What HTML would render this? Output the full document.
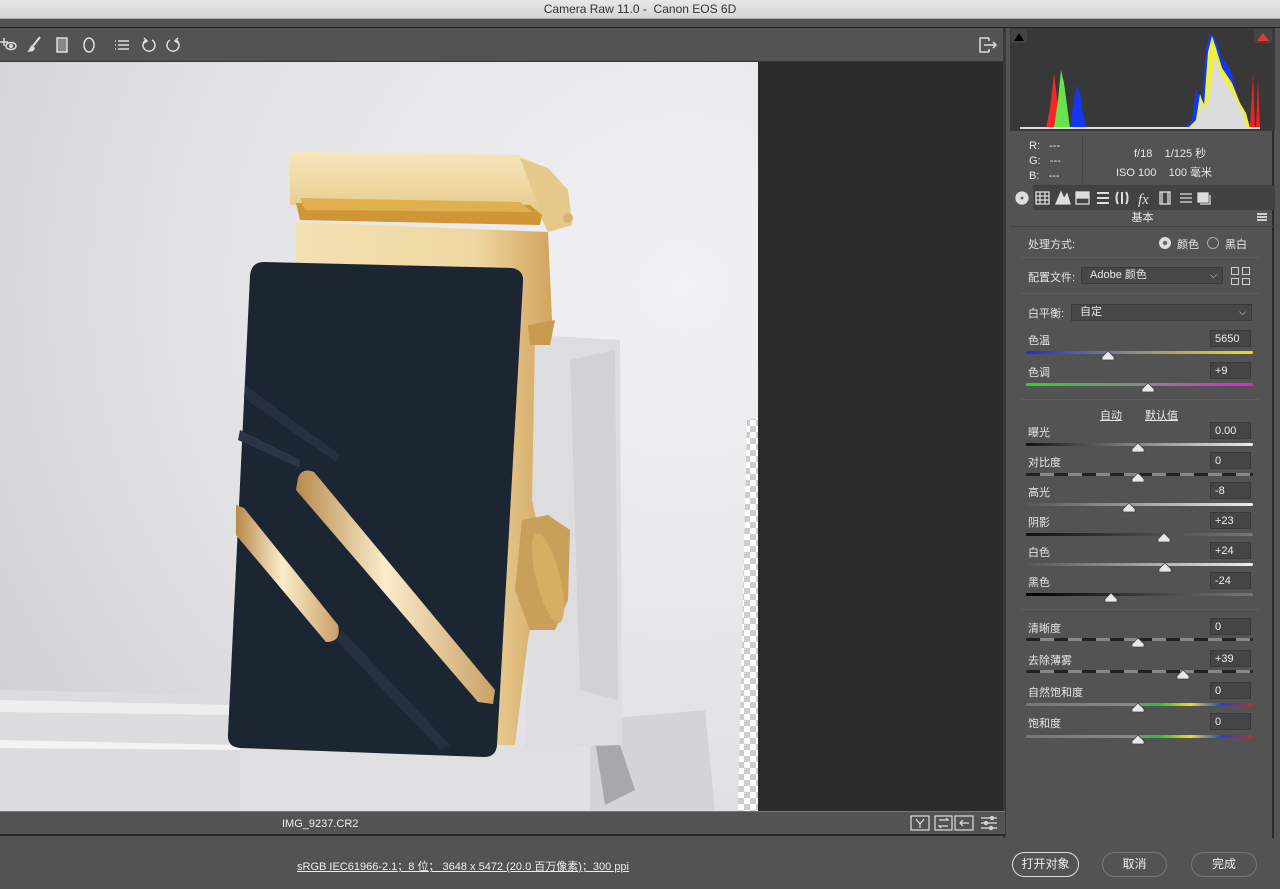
<!DOCTYPE html>
<html><head><meta charset="utf-8"><style>
*{margin:0;padding:0;box-sizing:border-box}
body{width:1280px;height:889px;overflow:hidden;background:#535353;font-family:"Liberation Sans","Noto Sans CJK SC",sans-serif;color:#e8e8e8;font-size:11px;position:relative}
.a{position:absolute}
.lbl{position:absolute;left:1028px;font-size:11px;color:#e6e6e6}
.box{position:absolute;left:1210px;width:41px;height:17px;background:#454545;border:1px solid #3a3a3a;color:#eee;font-size:11px;padding:2px 4px;line-height:12px}
.tr{position:absolute;left:1026px;width:227px;height:3px;border-radius:2px;background:linear-gradient(#222,#777)}
.sep{position:absolute;left:1021px;width:238px;height:1px;background:#444;border-bottom:1px solid #5e5e5e}
.btn{position:absolute;top:852px;height:25px;border:1px solid #777;border-radius:13px;text-align:center;line-height:23px;font-size:12px;color:#eee}
</style></head><body>
<div class="a" style="left:0;top:0;width:1280px;height:19px;background:linear-gradient(#e8e8e8,#d6d6d6);color:#333;font-size:12px;text-align:center;line-height:18px;border-bottom:1px solid #aaa">Camera Raw 11.0 -&nbsp; Canon EOS 6D</div>
<div class="a" style="left:0;top:19px;width:1280px;height:9px;background:#535353;border-bottom:1px solid #222"></div>
<div class="a" style="left:0;top:28px;width:1005px;height:34px;background:#535353;border-bottom:1px solid #333"></div>
<svg class="a" style="left:0;top:30px" width="200" height="30" stroke="#ddd" fill="none" stroke-width="1.5">
<path d="M0 12h8M4 8v8"/><ellipse cx="11" cy="16" rx="5" ry="3.5"/><circle cx="11" cy="16" r="1.2" fill="#ddd"/>
<path d="M40 7l-7 9" stroke-width="2"/><path d="M32 16c-2 2-2 4-3 5 3 0 5-1 5-3z" fill="#ddd"/>
<rect x="57" y="8" width="10" height="14" fill="#888"/>
<ellipse cx="89" cy="15" rx="5" ry="7"/>
<path d="M118 11h11M118 15h11M118 19h11M115 11h1M115 15h1M115 19h1"/>
<path d="M146 10a6 6 0 1 0 6 0"/><path d="M144 8l3 3-3 2" />
<path d="M170 10a6 6 0 1 0 6 0"/><path d="M178 8l-3 3 3 2"/>
</svg>
<svg class="a" style="left:977px;top:35px" width="22" height="20" stroke="#ddd" fill="none" stroke-width="1.5"><path d="M12 3H3v14h9M12 17V14M12 3v3"/><path d="M7 10h12M16 7l3 3-3 3"/></svg>
<svg class="a" style="left:0;top:62px" width="758" height="749" viewBox="0 62 758 749">
<defs>
<radialGradient id="bg" cx="0.9" cy="0.3" r="1.1"><stop offset="0" stop-color="#f2f1f3"/><stop offset=".6" stop-color="#e2e2e5"/><stop offset="1" stop-color="#cfcfd3"/></radialGradient>
<linearGradient id="gold" x1="0" y1="0" x2="1" y2="0"><stop offset="0" stop-color="#f3e0b2"/><stop offset=".7" stop-color="#efd7a0"/><stop offset="1" stop-color="#d2a560"/></linearGradient>
<linearGradient id="bar" x1="0" y1="0" x2="1" y2="0"><stop offset="0" stop-color="#b68a4c"/><stop offset=".45" stop-color="#fbeccb"/><stop offset="1" stop-color="#caa066"/></linearGradient>
<linearGradient id="cap" x1="0" y1="0" x2="0" y2="1"><stop offset="0" stop-color="#f7e6bb"/><stop offset="1" stop-color="#e2c27e"/></linearGradient>
<pattern id="ck" width="12" height="12" patternUnits="userSpaceOnUse"><rect width="12" height="12" fill="#fff"/><rect width="6" height="6" fill="#ccc"/><rect x="6" y="6" width="6" height="6" fill="#ccc"/></pattern>
</defs>
<rect x="0" y="62" width="758" height="749" fill="url(#bg)"/>
<path d="M747 420L758 418V811H738Z" fill="url(#ck)"/>
<path d="M0 690L240 695 240 811H0Z" fill="#dcdcde"/>
<path d="M0 700L235 705V715L0 712Z" fill="#eeeeef"/>
<path d="M0 740L240 745V750L0 748Z" fill="#f3f3f4"/>
<path d="M240 745L600 745 600 811 240 811Z" fill="#e0e0e2"/>
<path d="M590 720L705 710 715 811 590 811Z" fill="#d4d4d6"/>
<path d="M595 740l25 5 15 45-30 15z" fill="#a8a8aa"/>
<path d="M535 335L620 340 622 745 525 748Z" fill="#dddddf"/>
<path d="M570 360L615 350 618 700 580 690Z" fill="#cdcdcf" opacity=".7"/>
<path d="M296 222L548 232 552 320 535 335 532 500 545 560 528 640 515 745 300 745Z" fill="url(#gold)"/>
<path d="M528 325L555 320 550 345 530 345Z" fill="#c89a50"/>
<path d="M522 520L548 515 570 530 568 600 555 630 530 630 515 590Z" fill="#c9a05a"/>
<ellipse cx="548" cy="578" rx="12" ry="46" fill="#d7ae62" transform="rotate(-14 548 578)"/>
<path d="M290 155Q292 152 300 152L520 155 545 168 568 190 572 225 548 232 540 215 290 205Z" fill="url(#cap)"/>
<path d="M520 158L548 168 568 190 572 225 548 232Z" fill="#e6c88a"/>
<path d="M296 203L530 205 542 215 540 225 300 220Z" fill="#cf9638"/>
<path d="M300 198L520 202 532 212 305 210Z" fill="#e0b050"/>
<path d="M563 218a5 5 0 1 0 10 0a5 5 0 1 0-10 0" fill="#d9b26a"/>
<path d="M264 262L512 268Q524 270 523 282L497 745Q496 757 484 757L240 748Q227 747 228 734L250 276Q251 262 264 262Z" fill="#1c2532"/>
<path d="M245 385L340 455 336 462 244 398Z" fill="#263040"/>
<path d="M240 430L300 460 300 468 238 440Z" fill="#2a3545"/>
<path d="M342 630L450 745 440 750 336 640Z" fill="#263040"/>
<path d="M298 478Q302 467 314 472L495 690 493 704 478 702 296 490Z" fill="url(#bar)"/>
<path d="M236 505L244 508 338 625Q342 642 326 642L236 535Z" fill="url(#bar)"/>
</svg>
<div class="a" style="left:758px;top:62px;width:247px;height:749px;background:#2b2b2b"></div>
<div class="a" style="left:1003px;top:28px;width:3px;height:810px;background:#3a3a3a"></div>
<div class="a" style="left:0;top:811px;width:1005px;height:25px;background:#535353;border-top:1px solid #777;border-bottom:2px solid #2a2a2a"></div>
<div class="a" style="left:282px;top:818px;font-size:11px;color:#eee">IMG_9237.CR2</div>
<svg class="a" style="left:908px;top:814px" width="92" height="20" stroke="#ddd" fill="none" stroke-width="1.2">
<rect x="3" y="2" width="18" height="14"/><path d="M8 5l4 5 4-5M12 10v4"/>
<rect x="27" y="2" width="17" height="14"/><path d="M31 6h9l-2-2M40 12h-9l2 2"/>
<rect x="47" y="2" width="18" height="14"/><path d="M52 9h9M55 6l-3 3 3 3"/>
<path d="M73 4h16M73 9h16M73 14h16"/><circle cx="84" cy="4" r="1.5"/><circle cx="78" cy="9" r="1.5"/><circle cx="83" cy="14" r="1.5"/>
</svg>
<div class="a" style="left:297px;top:858px;font-size:11px;color:#eee;text-decoration:underline">sRGB IEC61966-2.1；8 位；&nbsp;3648 x 5472 (20.0 百万像素)；300 ppi</div>
<div class="btn" style="left:1012px;width:67px;border-color:#ddd">打开对象</div>
<div class="btn" style="left:1102px;width:65px">取消</div>
<div class="btn" style="left:1191px;width:66px">完成</div>
<div class="a" style="left:1006px;top:28px;width:268px;height:810px;background:#535353;border-right:2px solid #2a2a2a"></div>
<div class="a" style="left:1010px;top:28px;width:265px;height:103px;background:#383838"></div>
<svg class="a" style="left:1010px;top:28px" width="265" height="103">
<rect x="1" y="1" width="16" height="14" fill="#444"/><path d="M4 13L9 5 14 13Z" fill="#000"/>
<rect x="244" y="1" width="18" height="14" fill="#444"/><path d="M247 13L253 5 259 13Z" fill="#e33"/>
<path d="M36 100L40 80 44 45 47 70 50 100Z" fill="#f02828"/>
<path d="M44 100L48 72 51 42 54 55 56 70 60 100Z" fill="#66e44a"/>
<path d="M60 100L64 70 67 57 70 65 72 80 76 100Z" fill="#1438f0"/>
<path d="M175 100L182 92 186 60 192 75 196 20 200 6 205 10 212 30 220 40 228 70 235 85 240 100Z" fill="#1438f0"/>
<path d="M178 100L186 92 190 66 194 78 198 24 202 8 206 20 212 40 222 55 230 75 236 85 240 100Z" fill="#f0f040"/>
<path d="M182 100L188 90 192 72 197 82 205 28 210 45 220 62 228 75 234 88 236 100Z" fill="#dcdcdc"/>
<path d="M240 100L243 45 245 100Z M246 100L248 50 250 100Z" fill="#e22"/>
<rect x="10" y="99" width="240" height="2" fill="#ddd"/>
</svg>
<div class="a" style="left:1029px;top:139px;line-height:15px;font-size:11px">R:&nbsp;&nbsp; ---<br>G:&nbsp;&nbsp; ---<br>B:&nbsp;&nbsp; ---</div>
<div class="a" style="left:1082px;top:135px;width:1px;height:48px;background:#444"></div>
<div class="a" style="left:1134px;top:145px;font-size:11px">f/18&nbsp;&nbsp;&nbsp; 1/125 秒</div>
<div class="a" style="left:1116px;top:164px;font-size:11px">ISO 100&nbsp;&nbsp;&nbsp; 100 毫米</div>
<div class="a" style="left:1010px;top:185px;width:265px;height:25px;background:#424242"></div>
<div class="a" style="left:1010px;top:185px;width:23px;height:26px;background:#535353"></div>
<svg class="a" style="left:1010px;top:185px" width="210" height="25" stroke="#ddd" fill="none" stroke-width="1.3">
<circle cx="12" cy="13" r="6" fill="#ddd"/><circle cx="12" cy="13" r="2" fill="#535353"/>
<rect x="26" y="7" width="13" height="12"/><path d="M26 11h13M26 15h13M30 7v12M35 7v12"/>
<path d="M46 19l5-12 3 7 3-5 3 10z" fill="#ddd"/>
<rect x="66" y="7" width="13" height="12"/><path d="M66 13h13"/><rect x="67" y="8" width="11" height="4" fill="#ddd"/>
<path d="M87 8h12M87 13h12M87 18h12" stroke-width="2"/>
<path d="M108 7c-2 3-2 9 0 12M112 7v12M116 7c2 3 2 9 0 12" stroke-width="2"/>
<text x="128" y="19" fill="#ddd" stroke="none" font-size="15" font-style="italic" font-family="Liberation Serif">fx</text>
<rect x="150" y="7" width="10" height="12"/><path d="M152 7v12M158 7v12"/>
<path d="M170 9h12M170 13h12M170 17h12"/>
<rect x="188" y="8" width="10" height="9" fill="#ddd"/><path d="M190 19h10v-9"/>
</svg>
<div class="a" style="left:1010px;top:210px;width:265px;height:17px;border-bottom:1px solid #444;text-align:center;font-size:11px;line-height:16px">基本</div>
<div class="a" style="left:1257px;top:213px;width:10px;height:8px;border-top:2px solid #ccc;border-bottom:2px solid #ccc"><div style="margin-top:1px;height:2px;background:#ccc"></div></div>
<div class="lbl" style="top:236px">处理方式:</div>
<div class="a" style="left:1159px;top:237px;width:12px;height:12px;border-radius:50%;background:#ccc;border:3px solid #ddd"><div style="width:4px;height:4px;margin:1px;background:#666;border-radius:50%"></div></div>
<div class="a" style="left:1177px;top:236px">颜色</div>
<div class="a" style="left:1207px;top:237px;width:12px;height:12px;border-radius:50%;border:1px solid #aaa"></div>
<div class="a" style="left:1225px;top:236px">黑白</div>
<div class="sep" style="top:257px"></div>
<div class="lbl" style="top:269px">配置文件:</div>
<div class="a" style="left:1081px;top:267px;width:142px;height:17px;background:#474747;border:1px solid #3a3a3a;padding-left:8px;line-height:15px">Adobe 颜色<span style="position:absolute;right:5px;font-size:9px">⌵</span></div>
<div class="a" style="left:1231px;top:267px;width:20px;height:18px;display:grid;grid-template-columns:8px 8px;gap:3px"><i style="border:1px solid #ccc"></i><i style="border:1px solid #ccc"></i><i style="border:1px solid #ccc"></i><i style="border:1px solid #ccc"></i></div>
<div class="sep" style="top:293px"></div>
<div class="lbl" style="top:305px">白平衡:</div>
<div class="a" style="left:1071px;top:304px;width:181px;height:17px;background:#474747;border:1px solid #3a3a3a;padding-left:8px;line-height:15px">自定<span style="position:absolute;right:5px;font-size:9px">⌵</span></div>
<div class="lbl" style="top:332px">色温</div><div class="box" style="top:330px">5650</div>
<div class="tr" style="top:351px;background:linear-gradient(90deg,#1530e0,#888 45%,#e8e020)"></div>
<div class="lbl" style="top:364px">色调</div><div class="box" style="top:362px">+9</div>
<div class="tr" style="top:383px;background:linear-gradient(90deg,#30d030,#888 50%,#e020e0)"></div>
<div class="sep" style="top:399px"></div>
<div class="a" style="left:1100px;top:407px;text-decoration:underline">自动</div>
<div class="a" style="left:1145px;top:407px;text-decoration:underline">默认值</div>
<div class="lbl" style="top:424px">曝光</div><div class="box" style="top:422px">0.00</div>
<div class="tr" style="top:443px;background:linear-gradient(90deg,#111,#888 50%,#eee)"></div>
<div class="lbl" style="top:454px">对比度</div><div class="box" style="top:452px">0</div>
<div class="tr" style="top:473px;background:repeating-linear-gradient(90deg,#222 0 14px,#888 14px 28px)"></div>
<div class="lbl" style="top:484px">高光</div><div class="box" style="top:482px">-8</div>
<div class="tr" style="top:503px;background:linear-gradient(90deg,#555,#eee)"></div>
<div class="lbl" style="top:514px">阴影</div><div class="box" style="top:512px">+23</div>
<div class="tr" style="top:533px;background:linear-gradient(90deg,#111,#777)"></div>
<div class="lbl" style="top:544px">白色</div><div class="box" style="top:542px">+24</div>
<div class="tr" style="top:563px;background:linear-gradient(90deg,#555,#eee)"></div>
<div class="lbl" style="top:574px">黑色</div><div class="box" style="top:572px">-24</div>
<div class="tr" style="top:593px;background:linear-gradient(90deg,#000,#777)"></div>
<div class="sep" style="top:609px"></div>
<div class="lbl" style="top:620px">清晰度</div><div class="box" style="top:618px">0</div>
<div class="tr" style="top:638px;background:repeating-linear-gradient(90deg,#222 0 14px,#888 14px 28px)"></div>
<div class="lbl" style="top:652px">去除薄雾</div><div class="box" style="top:650px">+39</div>
<div class="tr" style="top:670px;background:repeating-linear-gradient(90deg,#222 0 14px,#888 14px 28px)"></div>
<div class="lbl" style="top:684px">自然饱和度</div><div class="box" style="top:682px">0</div>
<div class="tr" style="top:703px;background:linear-gradient(90deg,#777,#888 45%,#30c030,#e0e020,#2040e0,#e02020)"></div>
<div class="lbl" style="top:715px">饱和度</div><div class="box" style="top:713px">0</div>
<div class="tr" style="top:735px;background:linear-gradient(90deg,#777,#888 45%,#30c030,#e0e020,#2040e0,#e02020)"></div>
<svg class="a" style="left:0;top:0" width="1280" height="889" fill="#e8e8e8" stroke="#444" stroke-width=".8">
<path d="M1102 357l6-6 6 6v3h-12z"/>
<path d="M1142 389l6-6 6 6v3h-12z"/>
<path d="M1132 449l6-6 6 6v3h-12z"/>
<path d="M1132 479l6-6 6 6v3h-12z"/>
<path d="M1123 509l6-6 6 6v3h-12z"/>
<path d="M1158 539l6-6 6 6v3h-12z"/>
<path d="M1159 569l6-6 6 6v3h-12z"/>
<path d="M1105 599l6-6 6 6v3h-12z"/>
<path d="M1132 644l6-6 6 6v3h-12z"/>
<path d="M1177 676l6-6 6 6v3h-12z"/>
<path d="M1132 709l6-6 6 6v3h-12z"/>
<path d="M1132 741l6-6 6 6v3h-12z"/>
</svg>
</body></html>
